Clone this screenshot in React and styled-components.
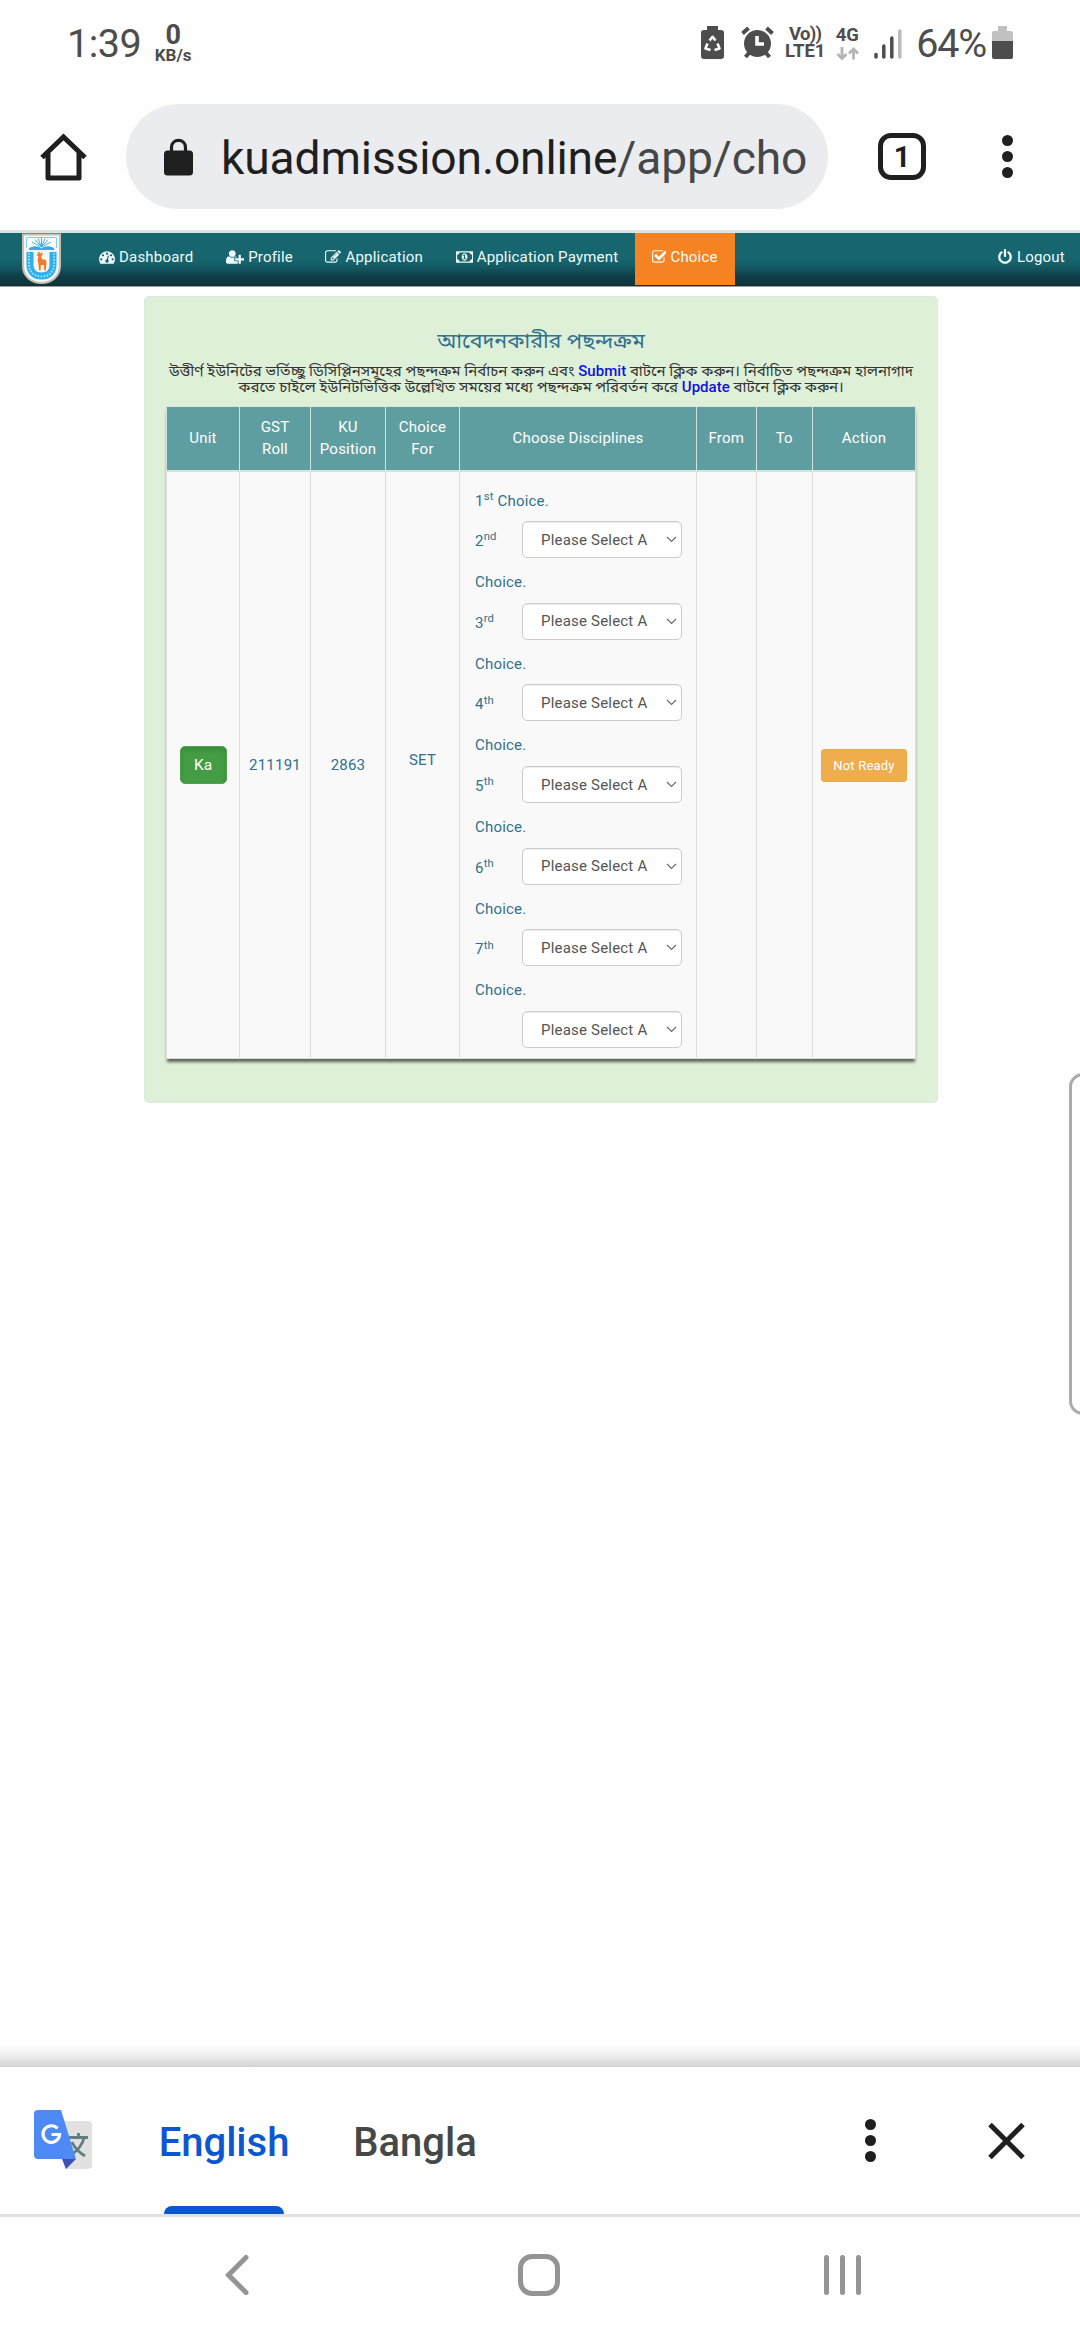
import React from "react";
import styled, { createGlobalStyle } from "styled-components";

const Global = createGlobalStyle`
  * { box-sizing: border-box; }
  body { margin: 0; background: #fefefe; font-family: Roboto, "Noto Sans Bengali", "Noto Sans", sans-serif; }
  svg { display: block; flex: none; }
`;

const Screen = styled.div`
  position: relative;
  display: flex;
  flex-direction: column;
  width: 1080px;
  height: 2340px;
  overflow: hidden;
  background: #fefefe;
`;

/* ---------- status bar ---------- */
const StatusBar = styled.header`
  display: flex;
  justify-content: space-between;
  height: 90px;
  padding: 0 67px 0 67px;
  color: #4d4d4d;
`;
const StatusSide = styled.div`
  display: flex;
  align-items: flex-start;
`;
const BigText = styled.span`
  display: block;
  font-size: 39.5px;
  line-height: 46px;
  padding-top: ${(p) => p.$pt || 21}px;
  letter-spacing: ${(p) => p.$ls || 0}px;
`;
const Stack = styled.div`
  display: flex;
  flex-direction: column;
  align-items: center;
  margin-left: ${(p) => p.$ml}px;
  padding-top: ${(p) => p.$pt}px;
  width: ${(p) => p.$w}px;
`;
const Tiny = styled.span`
  font-size: ${(p) => p.$size}px;
  line-height: ${(p) => p.$lh}px;
  font-weight: ${(p) => p.$weight || 700};
  letter-spacing: ${(p) => p.$ls || 0}px;
  white-space: nowrap;
`;
const IconSlot = styled.div`
  padding-top: ${(p) => p.$pt || 0}px;
  margin-left: ${(p) => p.$ml || 0}px;
`;

/* ---------- browser toolbar ---------- */
const Toolbar = styled.div`
  display: flex;
  align-items: center;
  height: 140px;
  padding: 0 67px 7px 40px;
`;
const AddressPill = styled.div`
  display: flex;
  align-items: center;
  width: 702px;
  height: 105px;
  margin-left: 39px;
  padding-left: 38px;
  border-radius: 53px;
  background: #ebecf0;
`;
const Address = styled.span`
  margin-left: 28px;
  font-size: 46.2px;
  letter-spacing: -0.15px;
  line-height: 56px;
  white-space: nowrap;
  color: #1f1f1f;
  padding-top: 3px;
`;
const AddressPath = styled.span`
  color: #464847;
`;
const TabCount = styled.div`
  display: flex;
  align-items: center;
  justify-content: center;
  width: 48px;
  height: 47px;
  margin-left: 50px;
  border: 5px solid #1f1f1f;
  border-radius: 13px;
  font-size: 29px;
  font-weight: 700;
  color: #1f1f1f;
`;
const Dots = styled.div`
  display: flex;
  flex-direction: column;
  gap: 5px;
`;
const Dot = styled.i`
  width: 11px;
  height: 11px;
  border-radius: 50%;
  background: #1f1f1f;
`;

/* ---------- site navigation ---------- */
const SiteNav = styled.nav`
  display: flex;
  height: 57px;
  padding: 0 15px 0 22px;
  border-top: 3px solid #d9e6e4;
  border-bottom: 1px solid #98a0a1;
  background: linear-gradient(#17656f 0, #17656f 50%, #155c66 62%, #0f3b44 84%, #0f3840 97%, #1c2a2e 98%);
`;
const NavItem = styled.a`
  display: flex;
  align-items: center;
  gap: 4px;
  height: 52px;
  padding: 0 ${(p) => p.$r || 16.25}px 4px ${(p) => p.$l || 16.25}px;
  font-size: 15px;
  letter-spacing: 0.2px;
  white-space: nowrap;
  color: #f1fafa;
  background: ${(p) => (p.$active ? "#f58321" : "transparent")};
`;
const Push = styled.div`
  flex: 1;
`;

/* ---------- content panel ---------- */
const Panel = styled.main`
  width: 794px;
  height: 807px;
  margin: 9px 0 0 144px;
  padding: 30px 21px 0;
  border: 1px solid #dfe9db;
  border-radius: 5px;
  background: #dff0d8;
`;
const Title = styled.h1`
  margin: 0;
  height: 36px;
  font-size: 21.4px;
  line-height: 28px;
  font-weight: 400;
  text-align: center;
  color: #31708f;
`;
const Notice = styled.p`
  margin: 0 -20px;
  height: 43px;
  font-size: 15px;
  letter-spacing: 0.03px;
  line-height: 16px;
  text-align: center;
  white-space: nowrap;
  color: #333;
`;
const Key = styled.span`
  font-weight: 500;
  color: #1212dd;
`;

const columns = "73px 71px 75px 74px 237px 59.5px 56.5px 102px";
const Table = styled.section`
  width: 750px;
  border: 1px solid #ddd;
  box-shadow: 0 4px 3px -1px rgba(0, 0, 0, 0.6);
  background: #f9f9f9;
`;
const HeadRow = styled.div`
  display: grid;
  grid-template-columns: ${columns};
  height: 65px;
  border-bottom: 2px solid #d5e0df;
  background: #5f9ea0;
`;
const BodyRow = styled.div`
  display: grid;
  grid-template-columns: ${columns};
  grid-template-rows: 586px;
  height: 586px;
`;
const HeadCell = styled.div`
  display: flex;
  align-items: center;
  justify-content: center;
  text-align: center;
  padding-bottom: 2px;
  font-size: 15px;
  letter-spacing: 0.22px;
  line-height: 22px;
  color: #fff;
  border-right: ${(p) => (p.$last ? 0 : 1)}px solid #d5e2e1;
`;
const Cell = styled.div`
  display: flex;
  align-items: center;
  justify-content: center;
  font-size: 15px;
  letter-spacing: 0.2px;
  padding-bottom: ${(p) => p.$lift || 0}px;
  color: #31708f;
  border-right: ${(p) => (p.$last ? 0 : 1)}px solid #ddd;
`;
const Choices = styled(Cell)`
  flex-direction: column;
  align-items: stretch;
  justify-content: flex-start;
  padding: 17px 14px 0 15px;
`;
const Line = styled.div`
  flex: none;
  height: 32px;
  line-height: 24px;
`;
const Sup = styled.sup`
  position: relative;
  top: -0.5em;
  vertical-align: baseline;
  line-height: 0;
  font-size: 75%;
`;
const Block = styled.div`
  flex: none;
  height: 81.7px;
  &:last-child { height: 49px; }
`;
const Pick = styled.div`
  display: flex;
  align-items: center;
  justify-content: space-between;
  height: 49px;
  padding-bottom: 12px;
`;
const Ordinal = styled.span`
  padding-top: 3px;
`;
const SelectBox = styled.div`
  display: flex;
  align-items: center;
  justify-content: space-between;
  width: 160px;
  height: 37px;
  padding: 0 4px 0 18px;
  border: 1px solid #ccc;
  border-radius: 5px;
  box-shadow: inset 0 1px 1px rgba(0, 0, 0, 0.075);
  background: #fff;
  color: #555;
`;
const UnitButton = styled.button`
  width: 47px;
  height: 38px;
  padding: 0;
  border: 1px solid #4ca64c;
  border-radius: 5px;
  background: #449d44;
  box-shadow: inset 0 3px 5px rgba(0, 0, 0, 0.125);
  font: 400 15.5px Roboto, sans-serif;
  color: #fff;
`;
const WaitButton = styled.button`
  width: 86px;
  height: 33px;
  padding: 0;
  border: 1px solid #eeab4c;
  border-radius: 3px;
  background: #f0ad4e;
  font: 400 13px Roboto, sans-serif;
  letter-spacing: 0.2px;
  color: #fff;
`;

/* ---------- edge handle ---------- */
const EdgeHandle = styled.div`
  position: absolute;
  left: 1069px;
  top: 1073px;
  width: 30px;
  height: 342px;
  border: 3px solid #ababab;
  border-radius: 14px;
`;

/* ---------- translate bar ---------- */
const Shade = styled.div`
  height: 22px;
  margin-top: auto;
  background: linear-gradient(rgba(254, 254, 254, 1), #f0f0f0 45%, #d2d2d2);
`;
const TranslateBar = styled.section`
  display: flex;
  height: 150px;
  padding: 0 55px 0 34px;
  border-bottom: 3px solid #e1e2e2;
`;
const Language = styled.div`
  display: flex;
  flex-direction: column;
  justify-content: space-between;
  align-items: center;
  width: ${(p) => p.$w}px;
  margin-left: ${(p) => p.$ml}px;
  padding-top: 52px;
  font-size: 40px;
  line-height: 47px;
  font-weight: 500;
  white-space: nowrap;
  color: ${(p) => (p.$active ? "#0b57d0" : "#464847")};
`;
const Underline = styled.div`
  width: 120px;
  height: 8px;
  border-radius: 8px 8px 0 0;
  background: #0b57d0;
`;
const Center = styled.div`
  display: flex;
  align-items: center;
  height: 147px;
  margin-left: ${(p) => p.$ml || 0}px;
`;

/* ---------- system navigation ---------- */
const SystemNav = styled.footer`
  display: flex;
  align-items: flex-start;
  height: 123px;
  padding: 36px 0 0 224px;
`;
const HomeKey = styled.div`
  width: 42px;
  height: 42px;
  margin: 1px 0 0 269px;
  border: 5px solid #949494;
  border-radius: 14px;
`;
const Recents = styled.div`
  display: flex;
  gap: 11px;
  margin: 2px 0 0 263.5px;
`;
const Bar = styled.i`
  width: 5px;
  height: 40px;
  border-radius: 3px;
  background: #949494;
`;

/* ---------- drawings ---------- */
const glyphs = {
  dashboard: [1792, "M384 1152q0-53-37.5-90.5t-90.5-37.5-90.5 37.5-37.5 90.5 37.5 90.5 90.5 37.5 90.5-37.5 37.5-90.5zm192-448q0-53-37.5-90.5t-90.5-37.5-90.5 37.5-37.5 90.5 37.5 90.5 90.5 37.5 90.5-37.5 37.5-90.5zm428 481l101-382q6-26-7.5-48.5t-38.5-29.5-48 6.5-30 39.5l-101 382q-60 5-107 43.5t-63 98.5q-20 77 20 146t117 89 146-20 89-117q16-60-6-117t-72-91zm660-33q0-53-37.5-90.5t-90.5-37.5-90.5 37.5-37.5 90.5 37.5 90.5 90.5 37.5 90.5-37.5 37.5-90.5zm-640-640q0-53-37.5-90.5t-90.5-37.5-90.5 37.5-37.5 90.5 37.5 90.5 90.5 37.5 90.5-37.5 37.5-90.5zm448 192q0-53-37.5-90.5t-90.5-37.5-90.5 37.5-37.5 90.5 37.5 90.5 90.5 37.5 90.5-37.5 37.5-90.5zm320 448q0 261-141 483-19 29-54 29h-1402q-35 0-54-29-141-221-141-483 0-182 71-348t191-286 286-191 348-71 348 71 286 191 191 286 71 348z"],
  profile: [2048, "M704 896q-159 0-271.5-112.5t-112.5-271.5 112.5-271.5 271.5-112.5 271.5 112.5 112.5 271.5-112.5 271.5-271.5 112.5zm960 128h352q13 0 22.5 9.5t9.5 22.5v192q0 13-9.5 22.5t-22.5 9.5h-352v352q0 13-9.5 22.5t-22.5 9.5h-192q-13 0-22.5-9.5t-9.5-22.5v-352h-352q-13 0-22.5-9.5t-9.5-22.5v-192q0-13 9.5-22.5t22.5-9.5h352v-352q0-13 9.5-22.5t22.5-9.5h192q13 0 22.5 9.5t9.5 22.5v352zm-736 224q0 52 38 90t90 38h256v238q-68 50-171 50h-874q-121 0-194-69t-73-190q0-53 3.5-103.5t14-109 26.5-108.5 43-97.5 62-81 85.5-53.5 111.5-20q19 0 39 17 79 61 154.5 91.5t164.5 30.5 164.5-30.5 154.5-91.5q20-17 39-17 132 0 217 96h-223q-52 0-90 38t-38 90v192z"],
  application: [1792, "M888 1184l116-116-152-152-116 116v56h96v96h56zm440-720q-16-16-33 1l-350 350q-17 17-1 33t33-1l350-350q17-17 1-33zm80 594v190q0 119-84.5 203.5t-203.5 84.5h-832q-119 0-203.5-84.5t-84.5-203.5v-832q0-119 84.5-203.5t203.5-84.5h832q63 0 117 25 15 7 18 23 3 17-9 29l-49 49q-14 14-32 8-23-6-45-6h-832q-66 0-113 47t-47 113v832q0 66 47 113t113 47h832q66 0 113-47t47-113v-126q0-13 9-22l64-64q15-15 35-7t20 29zm-96-738l288 288-672 672h-288v-288zm444 132l-92 92-288-288 92-92q28-28 68-28t68 28l152 152q28 28 28 68t-28 68z"],
  payment: [1920, "M768 1152h384v-96h-128v-448h-114l-148 137 77 80q42-37 55-57h2v288h-128v96zm512-256q0 70-21 142t-59.5 134-101.5 101-138 39-138-39-101.5-101-59.5-134-21-142 21-142 59.5-134 101.5-101 138-39 138 39 101.5 101 59.5 134 21 142zm512 256v-512q-106 0-181-75t-75-181h-1152q0 106-75 181t-181 75v512q106 0 181 75t75 181h1152q0-106 75-181t181-75zm128-832v1152q0 26-19 45t-45 19h-1792q-26 0-45-19t-19-45v-1152q0-26 19-45t45-19h1792q26 0 45 19t19 45z"],
  choice: [1664, "M1344 930v318q0 119-84.5 203.5t-203.5 84.5h-832q-119 0-203.5-84.5t-84.5-203.5v-832q0-119 84.5-203.5t203.5-84.5h832q63 0 117 25 15 7 18 23 3 17-9 29l-49 49q-10 10-23 10-3 0-9-2-23-6-45-6h-832q-66 0-113 47t-47 113v832q0 66 47 113t113 47h832q66 0 113-47t47-113v-254q0-13 9-22l64-64q10-10 23-10 6 0 12 3 20 8 20 29zm231-489l-814 814q-24 24-57 24t-57-24l-430-430q-24-24-24-57t24-57l110-110q24-24 57-24t57 24l263 263 647-647q24-24 57-24t57 24l110 110q24 24 24 57t-24 57z"],
  logout: [1792, "M1664 896q0 156-61 298t-164 245-245 164-298 61-298-61-245-164-164-245-61-298q0-182 80.5-343t226.5-270q43-32 95.5-25t83.5 50q32 42 24.5 94.5t-49.5 84.5q-98 74-151.5 181t-53.5 228q0 104 40.5 198.5t109.5 163.5 163.5 109.5 198.5 40.5 198.5-40.5 163.5-109.5 109.5-163.5 40.5-198.5q0-121-53.5-228t-151.5-181q-42-32-49.5-84.5t24.5-94.5q31-43 84-50t95 25q146 109 226.5 270t80.5 343zm-640-768v640q0 52-38 90t-90 38-90-38-38-90v-640q0-52 38-90t90-38 90 38 38 90z"],
};

function Glyph({ name }) {
  const [w, d] = glyphs[name];
  const x = name === "choice" ? -64 : 0;
  return (
    <svg width={(w * 16) / 1792} height="16" viewBox={`${x} 0 ${w} 1792`} fill="currentColor">
      <path d={d} />
    </svg>
  );
}

function Crest() {
  return (
    <svg width="39" height="51" viewBox="0 0 39 51">
      <path d="M1 1.500H38V33C38 43 30 50 19.500 50S1 43 1 33Z" fill="#eef7fa" stroke="#cbbcae" strokeWidth="2" />
      <path d="M4.500 4.500H34.500V16H4.500Z" fill="#fff" />
      <path d="M4.500 5V15M34.500 5V15M4.500 4.500H34.500" stroke="#7fd0f0" strokeWidth="1" />
      <path d="M7 15C12 12.500 17 13 19.500 15.500C22 13 27 12.500 32 15V17H7Z" fill="#3da9dd" />
      <path d="M19.500 14L13 6.500M19.500 14L16 5.500M19.500 14V5M19.500 14L23 5.500M19.500 14L26 6.500M19.500 14L10 9M19.500 14L29 9" stroke="#45b2e4" strokeWidth="1" />
      <path d="M8 19V32C8 39.500 13 43 19.500 43S31 39.500 31 32V19" fill="none" stroke="#2bb0ee" strokeWidth="7" />
      <path d="M7 20V32C7 39.500 13 43.500 19.500 43.500S32 39.500 32 32V20" fill="none" stroke="#a8e0f7" strokeWidth="2" strokeDasharray="1.600 1.400" />
      <path d="M12 18V31C12 36 15 39 19.500 39S27 36 27 31V18Z" fill="#fdf6ee" />
      <path d="M16 19.500L17.500 18.500L17.800 20.500L19.500 20L20 18.500L20.600 21.500L19.500 23L19.800 26L23.800 27L24.500 30L23.800 37.500H22.200L22 32H18.800L18.600 37.500H17L16.400 30L15.500 27.500L16.500 23.500L15 22.500Z" fill="#ee7b2d" />
    </svg>
  );
}

function HomeIcon() {
  return (
    <svg width="47" height="48" viewBox="0 0 47 48" fill="none" stroke="#1f1f1f" strokeWidth="5">
      <path d="M2 24.500L23.500 4L45 24.500" />
      <path d="M8 20V45H39V20" strokeLinejoin="round" />
    </svg>
  );
}

function LockIcon() {
  return (
    <svg width="29" height="38" viewBox="0 0 29 38">
      <rect x="0" y="12.500" width="29" height="25" rx="3.500" fill="#1f1f1f" />
      <path d="M7.500 14V9.500C7.500 0 21.500 0 21.500 9.500V14" fill="none" stroke="#1f1f1f" strokeWidth="3.200" />
    </svg>
  );
}

function BatterySaver() {
  return (
    <svg width="23" height="33" viewBox="0 0 23 33">
      <path d="M6 0H17V4H20Q23 4 23 7V30Q23 33 20 33H3Q0 33 0 30V7Q0 4 3 4H6Z" fill="#4d4d4d" />
      <path d="M8.500 14.500L11.500 10.800L14.500 14.500M16.500 17.500L18.500 22.500L13.500 24M9.500 24L4.500 22.500L6.500 17.500" fill="none" stroke="#fff" strokeWidth="2.600" strokeLinejoin="round" />
    </svg>
  );
}

function AlarmIcon() {
  return (
    <svg width="33" height="33" viewBox="0 0 33 33" fill="none" stroke="#4d4d4d">
      <circle cx="16.500" cy="17.500" r="13.500" fill="#4d4d4d" stroke="none" />
      <path d="M1.500 7.500L7.500 2M31.500 7.500L25.500 2M4.500 31L8 27M28.500 31L25 27" strokeWidth="4" />
      <path d="M16 10V18H23" stroke="#fff" strokeWidth="3.600" />
    </svg>
  );
}

function DataArrows() {
  return (
    <svg width="23" height="14" viewBox="0 0 23 14" fill="none" stroke="#b5b5b5" strokeWidth="2.800">
      <path d="M6 0V11M1.500 7L6 11.500L10.500 7" />
      <path d="M17.500 12.500V2M13 6.500L17.500 2L22 6.500" />
    </svg>
  );
}

function Signal() {
  return (
    <svg width="28" height="30" viewBox="0 0 28 30" strokeLinecap="round" strokeWidth="3.500">
      <path d="M2 25.500V28M9.800 17V28M17.800 9V28" stroke="#4d4d4d" />
      <path d="M25.800 2V28" stroke="#bbb" />
    </svg>
  );
}

function Battery() {
  return (
    <svg width="21" height="33" viewBox="0 0 21 33">
      <path d="M6 0H15V5H19Q21 5 21 7V15H0V7Q0 5 2 5H6Z" fill="#c1c1c1" />
      <path d="M0 15H21V31Q21 33 19 33H2Q0 33 0 31Z" fill="#4d4d4d" />
    </svg>
  );
}

function TranslateIcon() {
  return (
    <svg width="59" height="61" viewBox="0 0 59 61">
      <path d="M25 11H54Q58 11 58 15V55Q58 59 54 59H31Z" fill="#e1e1e1" />
      <path d="M28 49H42L32 59Z" fill="#3f51b5" />
      <path d="M35 27.500H54M44.500 23V27.500M50 28C48 36 43 41 37 45M38 32C41 39 46 43 51 46" fill="none" stroke="#607d80" strokeWidth="2.800" />
      <path d="M4 0H27L42 49H4Q0 49 0 45V4Q0 0 4 0Z" fill="#4d8af5" />
      <path d="M23.500 18.500A8.300 8.300 0 1 0 25.600 24.500H17.500" fill="none" stroke="#fff" strokeWidth="3.200" />
    </svg>
  );
}

function CloseIcon() {
  return (
    <svg width="37" height="38" viewBox="0 0 37 38" stroke="#1f1f1f" strokeWidth="5">
      <path d="M2 2.500L35 35.500M35 2.500L2 35.500" />
    </svg>
  );
}

function BackIcon() {
  return (
    <svg width="25" height="44" viewBox="0 0 25 44" fill="none" stroke="#949494" strokeWidth="5" strokeLinecap="round">
      <path d="M22 4.500L4.500 22L22 39.500" />
    </svg>
  );
}

const Chevron = () => (
  <svg width="11" height="7" viewBox="0 0 11 7" fill="none" stroke="#6a6a6a" strokeWidth="1.200">
    <path d="M1 1L5.500 5.500L10 1" />
  </svg>
);

const Menu = () => (
  <Dots>
    <Dot />
    <Dot />
    <Dot />
  </Dots>
);

const ordinals = [["2", "nd"], ["3", "rd"], ["4", "th"], ["5", "th"], ["6", "th"], ["7", "th"], null];

export default function App() {
  return (
    <Screen>
      <Global />
      <StatusBar>
        <StatusSide>
          <BigText $ls={-0.5}>1:39</BigText>
          <Stack $ml={13} $pt={22} $w={38}>
            <Tiny $size={27} $lh={26}>0</Tiny>
            <Tiny $size={17} $lh={15}>KB/s</Tiny>
          </Stack>
        </StatusSide>
        <StatusSide>
          <IconSlot $pt={26}><BatterySaver /></IconSlot>
          <IconSlot $pt={26} $ml={17}><AlarmIcon /></IconSlot>
          <Stack $ml={11} $pt={26} $w={40}>
            <Tiny $size={18.5} $lh={17} $ls={-0.7}>Vo))</Tiny>
            <Tiny $size={18.5} $lh={17}>LTE1</Tiny>
          </Stack>
          <Stack $ml={10} $pt={26} $w={24}>
            <Tiny $size={18.5} $lh={18}>4G</Tiny>
            <IconSlot $pt={3}><DataArrows /></IconSlot>
          </Stack>
          <IconSlot $pt={29} $ml={15}><Signal /></IconSlot>
          <IconSlot $ml={14}><BigText $ls={-1.2}>64%</BigText></IconSlot>
          <IconSlot $pt={26} $ml={6}><Battery /></IconSlot>
        </StatusSide>
      </StatusBar>

      <Toolbar>
        <HomeIcon />
        <AddressPill>
          <LockIcon />
          <Address>
            kuadmission.online<AddressPath>/app/cho</AddressPath>
          </Address>
        </AddressPill>
        <TabCount>1</TabCount>
        <Push />
        <Menu />
      </Toolbar>

      <SiteNav>
        <Crest />
        <NavItem $l={38}><Glyph name="dashboard" />Dashboard</NavItem>
        <NavItem><Glyph name="profile" />Profile</NavItem>
        <NavItem><Glyph name="application" />Application</NavItem>
        <NavItem><Glyph name="payment" />Application Payment</NavItem>
        <NavItem $active $l={17} $r={17.5}><Glyph name="choice" />Choice</NavItem>
        <Push />
        <NavItem $r={0.1}><Glyph name="logout" />Logout</NavItem>
      </SiteNav>

      <Panel>
        <Title>আবেদনকারীর পছন্দক্রম</Title>
        <Notice>
          উত্তীর্ণ ইউনিটের ভর্তিচ্ছু ডিসিপ্লিনসমূহের পছন্দক্রম নির্বাচন করুন এবং <Key>Submit</Key> বাটনে ক্লিক করুন। নির্বাচিত পছন্দক্রম হালনাগাদ
          <br />
          করতে চাইলে ইউনিটভিত্তিক উল্লেখিত সময়ের মধ্যে পছন্দক্রম পরিবর্তন করে <Key>Update</Key> বাটনে ক্লিক করুন।
        </Notice>
        <Table>
          <HeadRow>
            <HeadCell>Unit</HeadCell>
            <HeadCell>GST<br />Roll</HeadCell>
            <HeadCell>KU<br />Position</HeadCell>
            <HeadCell>Choice<br />For</HeadCell>
            <HeadCell>Choose Disciplines</HeadCell>
            <HeadCell>From</HeadCell>
            <HeadCell>To</HeadCell>
            <HeadCell $last>Action</HeadCell>
          </HeadRow>
          <BodyRow>
            <Cell><UnitButton>Ka</UnitButton></Cell>
            <Cell>211191</Cell>
            <Cell>2863</Cell>
            <Cell $lift={10}>SET</Cell>
            <Choices>
              <Line>1<Sup>st</Sup> Choice.</Line>
              {ordinals.map((ord, i) => (
                <Block key={i}>
                  <Pick>
                    <Ordinal>{ord && <>{ord[0]}<Sup>{ord[1]}</Sup></>}</Ordinal>
                    <SelectBox>Please Select A<Chevron /></SelectBox>
                  </Pick>
                  {ord && <Line>Choice.</Line>}
                </Block>
              ))}
            </Choices>
            <Cell />
            <Cell />
            <Cell $last><WaitButton>Not Ready</WaitButton></Cell>
          </BodyRow>
        </Table>
      </Panel>

      <EdgeHandle />

      <Shade />
      <TranslateBar>
        <Center><TranslateIcon /></Center>
        <Language $w={128} $ml={67} $active>
          English
          <Underline />
        </Language>
        <Language $w={120} $ml={67}>Bangla</Language>
        <Push />
        <Center><Menu /></Center>
        <Center $ml={112}><CloseIcon /></Center>
      </TranslateBar>
      <SystemNav>
        <BackIcon />
        <HomeKey />
        <Recents>
          <Bar />
          <Bar />
          <Bar />
        </Recents>
      </SystemNav>
    </Screen>
  );
}
